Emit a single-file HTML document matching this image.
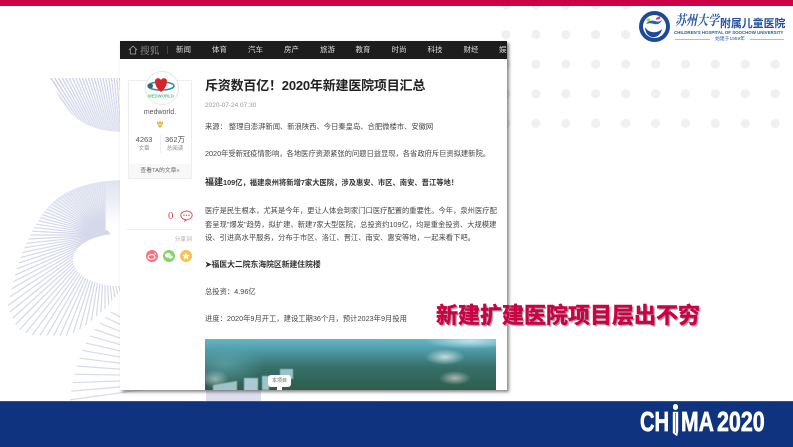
<!DOCTYPE html>
<html lang="zh"><head><meta charset="utf-8"><title>新建扩建医院项目</title>
<style>
html,body{margin:0;padding:0;background:#fff}
#s{position:relative;width:793px;height:447px;overflow:hidden;background:#fff;font-family:"Liberation Sans","Noto Sans CJK SC",sans-serif;filter:blur(.3px)}
#s div{position:absolute;white-space:nowrap}
.t{font-size:7.3px;line-height:10px;color:#444;left:85px}
.n{font-size:7.5px;line-height:10px;color:#ddd;top:3.5px;width:30px;text-align:center}
.c{text-align:center}
.b{top:406px;font-size:27.5px;line-height:32px;font-weight:bold;color:#fff;transform-origin:0 0;-webkit-text-stroke:.7px #fff}
</style></head><body><div id="s">
<!-- dots -->
<svg style="position:absolute;left:0;top:0" width="793" height="130"><defs><pattern id="d" x="491" y="-10" width="29.9" height="29.6" patternUnits="userSpaceOnUse"><circle cx="15" cy="15" r="4.6" fill="#f0f0f2"/></pattern></defs><rect x="491" y="0" width="302" height="133" fill="url(#d)"/></svg>
<div style="left:630px;top:6px;width:163px;height:43px;background:#fff"></div>

<!-- fans -->
<div style="left:0;top:70px;width:125px;height:70px;background:linear-gradient(180deg,rgba(225,228,241,0) 15%,rgba(225,228,241,.95) 95%),repeating-conic-gradient(from 0deg at 125px 120px,#ccd1e5 0 .6deg,transparent .6deg 1.4deg);clip-path:path('M50 8 L125 8 L125 62 C95 62 72 52 60 28 Z')"></div>
<svg style="position:absolute;left:0;top:170px" width="270" height="231" viewBox="0 170 270 231">
<defs>
<clipPath id="c1"><path d="M125 180 C85 181 58 191 42 215 C25 240 14 272 8 307 L17 328 L30 335 L67 336 L84 327 L107 307 L125 285 Z"/></clipPath>
<clipPath id="c2"><path d="M122 304 C100 318 85 340 78 362 L72 385 L70 401 L205 401 L205 300 L122 300 Z"/></clipPath>
<linearGradient id="g1" x1="0" y1="0" x2="0" y2="1"><stop offset="0" stop-color="#dfe2ef"/><stop offset=".35" stop-color="#dfe2ef" stop-opacity=".7"/><stop offset="1" stop-color="#dfe2ef" stop-opacity="0"/></linearGradient>
<line id="l" x1="105" y1="240" x2="105" y2="45" stroke="#d5d8ea" stroke-width="1.2"/>
<line id="m" x1="233" y1="300" x2="233" y2="200" stroke="#d8daec" stroke-width="1.2"/>
</defs>
<g clip-path="url(#c1)">
<use href="#l" transform="rotate(0 105 235)"/><use href="#l" transform="rotate(-3 105 235)"/><use href="#l" transform="rotate(-6 105 235)"/><use href="#l" transform="rotate(-9 105 235)"/><use href="#l" transform="rotate(-12 105 235)"/><use href="#l" transform="rotate(-15 105 235)"/><use href="#l" transform="rotate(-18 105 235)"/><use href="#l" transform="rotate(-21 105 235)"/><use href="#l" transform="rotate(-24 105 235)"/><use href="#l" transform="rotate(-27 105 235)"/><use href="#l" transform="rotate(-30 105 235)"/><use href="#l" transform="rotate(-33 105 235)"/><use href="#l" transform="rotate(-36 105 235)"/><use href="#l" transform="rotate(-39 105 235)"/><use href="#l" transform="rotate(-42 105 235)"/><use href="#l" transform="rotate(-45 105 235)"/><use href="#l" transform="rotate(-48 105 235)"/><use href="#l" transform="rotate(-51 105 235)"/><use href="#l" transform="rotate(-54 105 235)"/><use href="#l" transform="rotate(-57 105 235)"/><use href="#l" transform="rotate(-60 105 235)"/><use href="#l" transform="rotate(-63 105 235)"/><use href="#l" transform="rotate(-66 105 235)"/><use href="#l" transform="rotate(-69 105 235)"/><use href="#l" transform="rotate(-72 105 235)"/><use href="#l" transform="rotate(-75 105 235)"/><use href="#l" transform="rotate(-78 105 235)"/><use href="#l" transform="rotate(-81 105 235)"/><use href="#l" transform="rotate(-84 105 235)"/><use href="#l" transform="rotate(-87 105 235)"/><use href="#l" transform="rotate(-90 105 235)"/><use href="#l" transform="rotate(-93 105 235)"/><use href="#l" transform="rotate(-96 105 235)"/><use href="#l" transform="rotate(-99 105 235)"/><use href="#l" transform="rotate(-102 105 235)"/><use href="#l" transform="rotate(-105 105 235)"/><use href="#l" transform="rotate(-108 105 235)"/><use href="#l" transform="rotate(-111 105 235)"/><use href="#l" transform="rotate(-114 105 235)"/><use href="#l" transform="rotate(-117 105 235)"/><use href="#l" transform="rotate(-120 105 235)"/><use href="#l" transform="rotate(-123 105 235)"/><use href="#l" transform="rotate(-126 105 235)"/><use href="#l" transform="rotate(-129 105 235)"/><use href="#l" transform="rotate(-132 105 235)"/><use href="#l" transform="rotate(-135 105 235)"/><use href="#l" transform="rotate(-138 105 235)"/><use href="#l" transform="rotate(-141 105 235)"/><use href="#l" transform="rotate(-144 105 235)"/><use href="#l" transform="rotate(-147 105 235)"/><use href="#l" transform="rotate(-150 105 235)"/><use href="#l" transform="rotate(-153 105 235)"/><use href="#l" transform="rotate(-156 105 235)"/><use href="#l" transform="rotate(-159 105 235)"/><use href="#l" transform="rotate(-162 105 235)"/><use href="#l" transform="rotate(-165 105 235)"/><use href="#l" transform="rotate(-168 105 235)"/><use href="#l" transform="rotate(-171 105 235)"/><use href="#l" transform="rotate(-174 105 235)"/><use href="#l" transform="rotate(-177 105 235)"/><use href="#l" transform="rotate(-180 105 235)"/><use href="#l" transform="rotate(-183 105 235)"/><use href="#l" transform="rotate(-186 105 235)"/><use href="#l" transform="rotate(-189 105 235)"/><use href="#l" transform="rotate(-192 105 235)"/><use href="#l" transform="rotate(-195 105 235)"/><use href="#l" transform="rotate(-198 105 235)"/><use href="#l" transform="rotate(-201 105 235)"/>
<rect x="0" y="178" width="125" height="46" fill="url(#g1)"/>
</g>
<ellipse cx="118" cy="260" rx="45" ry="26" fill="#fff"/>
<g clip-path="url(#c2)">
<use href="#m" transform="rotate(-62 233 377)"/><use href="#m" transform="rotate(-65 233 377)"/><use href="#m" transform="rotate(-68 233 377)"/><use href="#m" transform="rotate(-71 233 377)"/><use href="#m" transform="rotate(-74 233 377)"/><use href="#m" transform="rotate(-77 233 377)"/><use href="#m" transform="rotate(-80 233 377)"/><use href="#m" transform="rotate(-83 233 377)"/><use href="#m" transform="rotate(-86 233 377)"/><use href="#m" transform="rotate(-89 233 377)"/><use href="#m" transform="rotate(-92 233 377)"/><use href="#m" transform="rotate(-95 233 377)"/><use href="#m" transform="rotate(-98 233 377)"/>
</g>
</svg>
<div style="left:206px;top:389px;width:55px;height:12px;background:#dedfee"></div>

<!-- panel -->
<div style="left:120px;top:41px;width:387px;height:349px;background:#fff;box-shadow:2px 2px 3px rgba(70,70,70,.65);overflow:hidden">
 <div style="left:0;top:0;width:387px;height:17.5px;background:#1d1d1d;overflow:hidden">
  <svg style="position:absolute;left:8px;top:4px" width="10" height="10" viewBox="0 0 10 10"><path d="M.8 5 5 1l4.2 4M2.3 4v5h5.4V4" fill="none" stroke="#aaa" stroke-width=".8"/></svg>
  <div style="left:20px;top:2.5px;font-size:9.5px;line-height:12px;color:#999;letter-spacing:.3px;font-family:'Noto Serif CJK SC',serif">搜狐</div>
  <div style="left:46.500px;top:5px;width:1px;height:8px;background:#444"></div>
  <div class="n" style="left:48.500px">新闻</div><div class="n" style="left:84.500px">体育</div><div class="n" style="left:120.500px">汽车</div><div class="n" style="left:156.500px">房产</div><div class="n" style="left:192.500px">旅游</div><div class="n" style="left:228px">教育</div><div class="n" style="left:264px">时尚</div><div class="n" style="left:300px">科技</div><div class="n" style="left:336px">财经</div><div class="n" style="left:371.500px">娱乐</div>
 </div>
 <!-- sidebar -->
 <div style="left:8px;top:39px;width:62px;height:97px;border:1px solid #eee"></div>
 <div style="left:9px;top:123px;width:62px;height:14px;background:#f8f8f8"></div>
 <div style="left:24.500px;top:30px;width:32px;height:32px;border-radius:50%;background:#fff;border:.6px solid #e6e6e6"></div>
 <svg style="position:absolute;left:25px;top:30px" width="32" height="32" viewBox="0 0 32 32"><ellipse cx="16" cy="15" rx="13" ry="4" fill="none" stroke="#2f8f99" stroke-width="1.6"/><circle cx="5.500" cy="15" r="2.500" fill="#44616b"/><path d="M16 21C11 17 10 13 10 10c0-3 4.500-4 6-1 1.500-3 6-2 6 1 0 3-1 7-6 11z" fill="#d8232a"/><text x="16" y="26.500" font-size="4.300" font-weight="bold" fill="#5bbf86" text-anchor="middle" font-family="Liberation Sans">MEDWORLD</text></svg>
 <div class="c" style="left:9px;top:66.500px;width:62px;font-size:7px;line-height:10px;color:#555">medworld.</div>
 <svg style="position:absolute;left:36px;top:79px" width="8" height="8" viewBox="0 0 8 8"><path d="M1 1 2.500 2.500 4 .8 5.500 2.500 7 1V4.500H1zM2 5h4v1L4 8 2 6z" fill="#f0b840"/></svg>
 <div class="c" style="left:8px;top:94px;width:32px;font-size:7.500px;line-height:10px;color:#555">4263</div>
 <div class="c" style="left:39px;top:94px;width:32px;font-size:7.500px;line-height:10px;color:#555">362万</div>
 <div class="c" style="left:8px;top:103px;width:32px;font-size:5.500px;line-height:10px;color:#888">文章</div>
 <div class="c" style="left:39px;top:103px;width:32px;font-size:5.500px;line-height:10px;color:#888">总阅读</div>
 <div style="left:39.500px;top:94px;width:.6px;height:18px;background:#eee"></div>
 <div class="c" style="left:9px;top:125px;width:62px;font-size:5.800px;line-height:10px;color:#666">查看TA的文章»</div>
 <div style="left:48px;top:168px;font-size:11px;line-height:14px;color:#d9484f;font-family:'Liberation Serif',serif">0</div>
 <svg style="position:absolute;left:60px;top:169px" width="13" height="12" viewBox="0 0 13 12"><path d="M6.500 1C3.200 1 .8 2.900.8 5.300c0 2.300 2.300 4.200 4.600 4.200L4.800 11l2.800-1.600c2.700-.3 4.600-2 4.600-4.100C12.200 2.900 9.800 1 6.500 1z" fill="none" stroke="#dc4b53" stroke-width=".9"/><circle cx="4" cy="5.300" r=".7" fill="#dc4b53"/><circle cx="6.500" cy="5.300" r=".7" fill="#dc4b53"/><circle cx="9" cy="5.300" r=".7" fill="#dc4b53"/></svg>
 <div style="left:7px;top:187.500px;width:65px;height:.8px;background:#eee"></div>
 <div style="left:52px;top:194px;width:20px;text-align:right;font-size:5.800px;line-height:10px;color:#aaa">分享到</div>
 <div style="left:26px;top:209px;width:12px;height:12px;border-radius:50%;background:#f6727f"></div>
 <svg style="position:absolute;left:26px;top:209px" width="12" height="12" viewBox="0 0 12 12"><ellipse cx="5.500" cy="7" rx="3.500" ry="2.400" fill="none" stroke="#fff" stroke-width="1"/><path d="M8 3a2 2 0 0 1 2 2" fill="none" stroke="#fff" stroke-width=".8"/></svg>
 <div style="left:43px;top:209px;width:12px;height:12px;border-radius:50%;background:#85d36b"></div>
 <svg style="position:absolute;left:43px;top:209px" width="12" height="12" viewBox="0 0 12 12"><ellipse cx="5" cy="5.300" rx="3" ry="2.400" fill="#fff"/><ellipse cx="7.500" cy="7" rx="2.400" ry="1.900" fill="#fff" stroke="#85d36b" stroke-width=".4"/></svg>
 <div style="left:60px;top:209px;width:12px;height:12px;border-radius:50%;background:#fdc04f"></div>
 <svg style="position:absolute;left:60px;top:209px" width="12" height="12" viewBox="0 0 12 12"><path d="M6 2.200 7.100 4.700 9.800 5 7.800 6.800 8.300 9.500 6 8.100 3.700 9.500 4.200 6.800 2.200 5 4.900 4.700z" fill="#fff"/></svg>
 <!-- article -->
 <div style="left:85px;top:36px;font-size:13px;line-height:18px;font-weight:bold;color:#222;letter-spacing:-.2px">斥资数百亿！2020年新建医院项目汇总</div>
 <div style="left:85px;top:60px;font-size:6.500px;line-height:10px;color:#999">2020-07-24 07:30</div>
 <div class="t" style="top:81px">来源： 整理自澎湃新闻、新浪陕西、今日秦皇岛、合肥微楼市、安徽网</div>
 <div class="t" style="top:108px;letter-spacing:-.03px">2020年受新冠疫情影响，各地医疗资源紧张的问题日益显现，各省政府斥巨资拟建新院。</div>
 <div class="t" style="top:136px;font-weight:bold;color:#333"><span style="font-size:9px">福建</span>109亿，福建泉州将新增7家大医院，涉及惠安、市区、南安、晋江等地！</div>
 <div class="t" style="top:165px">医疗是民生根本，尤其是今年，更让人体会到家门口医疗配置的重要性。今年，泉州医疗配</div>
 <div class="t" style="top:178.500px">套呈现"爆发"趋势，拟扩建、新建7家大型医院，总投资约109亿，均是重金投资、大规模建</div>
 <div class="t" style="top:192px">设、引进高水平服务，分布于市区、洛江、晋江、南安、惠安等地，一起来看下吧。</div>
 <div class="t" style="top:219px;font-weight:bold;color:#333;font-size:7.800px">➤福医大二院东海院区新建住院楼</div>
 <div class="t" style="top:246px">总投资：4.96亿</div>
 <div class="t" style="top:273px">进度：2020年9月开工，建设工期36个月，预计2023年9月投用</div>
 <!-- photo -->
 <div style="left:85px;top:298px;width:291px;height:51px;overflow:hidden;background:radial-gradient(ellipse 20px 8px at 240px 18px,rgba(215,235,235,.85),rgba(215,235,235,0)),radial-gradient(ellipse 45px 8px at 265px 2px,rgba(190,232,238,.95),rgba(190,232,238,0)),radial-gradient(ellipse 16px 7px at 250px 39px,rgba(200,205,195,.8),rgba(200,205,195,0)),radial-gradient(ellipse 14px 9px at 10px 40px,rgba(190,205,205,.7),rgba(190,205,205,0)),radial-gradient(ellipse 40px 22px at 20px 25px,rgba(100,170,180,.65),rgba(100,170,180,0)),linear-gradient(180deg,#66b6c7 0,#4c96a2 25%,#36706a 55%,#2e5d4d 100%)">
  <div style="left:8px;top:44px;width:24px;height:12px;background:#9fc3c9;transform:skewY(-10deg);filter:blur(.5px)"></div>
  <div style="left:39px;top:39px;width:14px;height:13px;background:#a9cbd1;filter:blur(.5px)"></div>
  <div style="left:57px;top:37px;width:7px;height:14px;background:#9fc5cc;filter:blur(.5px)"></div>
  <div style="left:75px;top:30px;width:13px;height:10px;background:#9ac2cb;filter:blur(.5px)"></div>
  <div style="left:63px;top:36px;width:23px;height:12px;background:#fff;border-radius:3px;text-align:center;font-size:5px;line-height:12px;color:#666">本项目</div>
  <div style="left:72px;top:47px;width:5px;height:4px;background:#fff"></div>
 </div>
</div>

<!-- headline -->
<div style="left:436px;top:298px;font-size:22px;line-height:32px;font-weight:bold;color:#cc0044;-webkit-text-stroke:.5px #cc0044;text-shadow:1.500px 1.500px 1px #999;font-family:'Noto Sans CJK SC',sans-serif">新建扩建医院项目层出不穷</div>

<!-- top bar -->
<div style="left:0;top:0;width:793px;height:5.500px;background:#cc0045"></div>

<!-- logo -->
<svg style="position:absolute;left:638px;top:10px" width="33" height="33" viewBox="0 0 33 33"><circle cx="16.500" cy="16.500" r="15.500" fill="#1d4a97"/><circle cx="16.500" cy="16.500" r="11.500" fill="#fff"/><path d="M7 17c3 6 12 7 17 2-1 6-6 9-10 8-4-.5-7-5-7-10z" fill="#1d4a97"/><path d="M8 14c2-3 5-4 9-3 3 1 5 1 7-1-1 3-4 5-8 4-3-1-5-1-8 0z" fill="#2a62b0"/><circle cx="10.500" cy="10" r="1.800" fill="#b5d334"/><path d="M18 8l4-2 .5 2.500-4 1.500z" fill="#e0308a"/></svg>
<div style="left:675px;top:12px;font-size:11px;line-height:16px;color:#2a5aa5;font-style:italic;font-family:'Noto Serif CJK SC',serif;font-weight:bold;transform-origin:0 50%;transform:scaleY(1.25)">苏州大学</div>
<div style="left:720px;top:15px;font-size:10.900px;line-height:16px;color:#1f4e9c;font-weight:bold;font-family:'Noto Sans CJK SC',sans-serif">附属儿童医院</div>
<div style="left:674px;top:29px;font-size:4.400px;line-height:7px;color:#2a5aa5;font-weight:bold">CHILDREN'S HOSPITAL OF SOOCHOW UNIVERSITY</div>
<div style="left:675px;top:38.500px;width:35px;height:1px;background:#a9bcdc"></div>
<div style="left:750px;top:38.500px;width:34px;height:1px;background:#a9bcdc"></div>
<div style="left:712px;top:35.500px;width:36px;text-align:center;font-size:4.800px;line-height:7px;color:#2a5aa5">始建于1959年</div>

<!-- bottom -->
<div style="left:0;top:401px;width:793px;height:46px;background:#10337f;border-top:1px solid #36558f;box-sizing:border-box"></div>
<div class="b" style="left:640px;transform:scaleX(.73)">CH</div>
<div class="b" style="left:681px;transform:scaleX(.77)">MA</div>
<div class="b" style="left:717px;transform:scaleX(.78)">2020</div>
<div style="left:672.500px;top:404px;width:5.500px;height:5.500px;border-radius:50%;background:#fff"></div>
<svg style="position:absolute;left:672px;top:411px" width="7" height="26" viewBox="0 0 7 26"><path d="M1 1h5v19l-1 5-4-3z" fill="#fff" stroke="#fff" stroke-width=".4"/><path d="M3.500 2v20" stroke="#10337f" stroke-width=".6"/></svg>
</div></body></html>
